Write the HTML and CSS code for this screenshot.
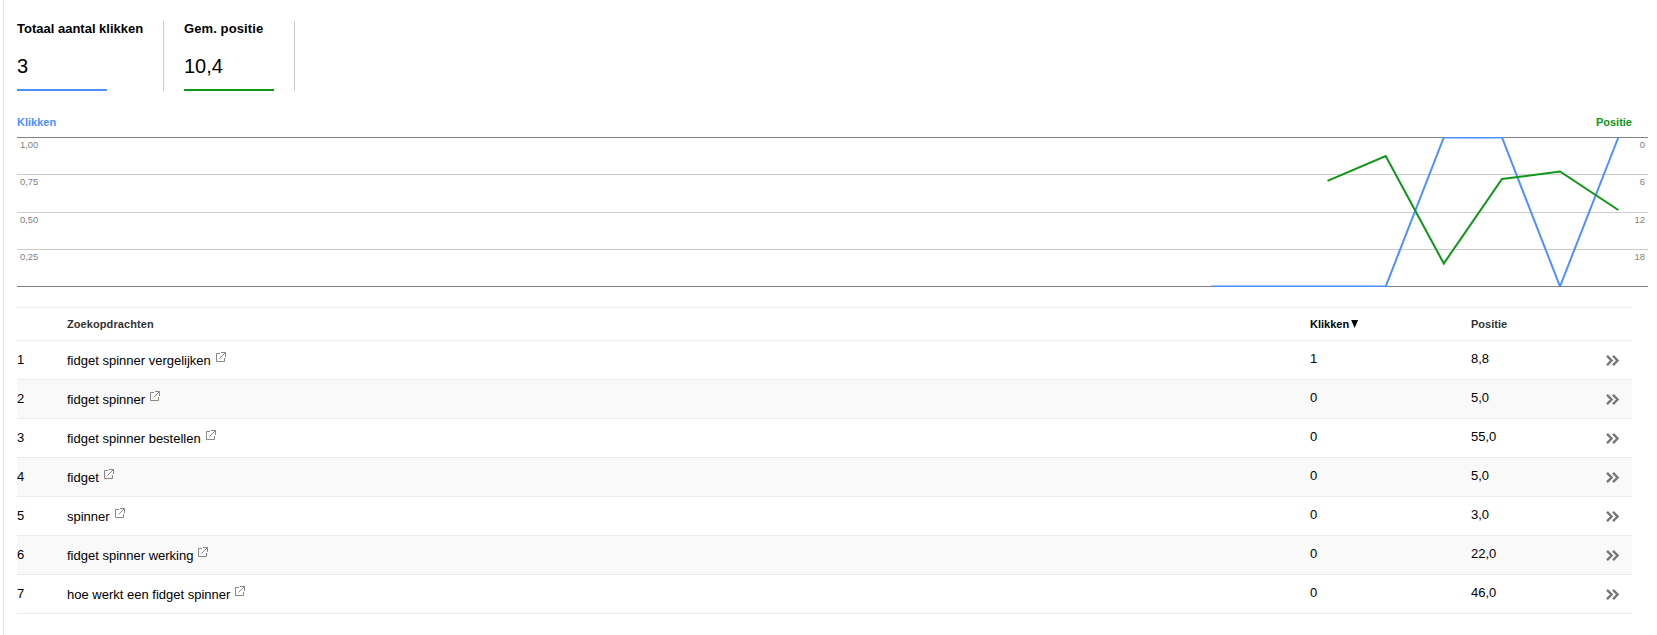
FILE: index.html
```html
<!DOCTYPE html>
<html lang="nl">
<head>
  <meta charset="UTF-8">
  <meta name="viewport" content="width=device-width, initial-scale=1">
  <title>Zoekanalyse</title>
  <link rel="stylesheet" href="styles.css">
</head>
<body>
  <!-- Shared icons -->
  <svg class="icon-defs" width="0" height="0">
    <symbol id="icon-open" viewBox="0 0 10 10">
      <path d="M4 1.5H0.5V9.5H8.5V6M5 0.5H9.5V5M3.5 6.5L9.5 0.5" />
    </symbol>
    <symbol id="icon-more" viewBox="0 0 13 11">
      <path d="M1 0.8L5.6 5.5L1 10.2M7 0.8L11.6 5.5L7 10.2" />
    </symbol>
  </svg>

  <main class="report">
    <section class="totals">
      <div class="total clicks">
        <div class="total-label">Totaal aantal klikken</div>
        <div class="total-value">3</div>
      </div>
      <div class="total position">
        <div class="total-label">Gem. positie</div>
        <div class="total-value">10,4</div>
      </div>
    </section>

    <section class="chart">
      <div class="chart-titles">
        <span class="title-clicks">Klikken</span>
        <span class="title-position">Positie</span>
      </div>
      <div class="plot">
        <div class="band top"><span>1,00</span><span>0</span></div>
        <div class="band"><span>0,75</span><span>6</span></div>
        <div class="band"><span>0,50</span><span>12</span></div>
        <div class="band"><span>0,25</span><span>18</span></div>
        <svg class="lines" width="1631" height="150" viewBox="0 0 1631 150">
          <polyline class="line-clicks" points="1194,149.5 1368.7,149.5 1426.8,0.5 1485,0.5 1543,149.5 1601.3,0.5" />
          <polyline class="line-position" points="1310.5,43.8 1368.7,19 1426.8,126.5 1485,42 1543,34.5 1601.3,73" />
        </svg>
      </div>
    </section>

    <table class="queries">
      <thead>
        <tr>
          <th class="col-rank"></th>
          <th class="col-query">Zoekopdrachten</th>
          <th class="col-clicks sorted">Klikken<span class="arrow"></span></th>
          <th class="col-position">Positie</th>
          <th class="col-more"></th>
        </tr>
      </thead>
      <tbody id="query-rows"></tbody>
    </table>
  </main>

  <script>
    const queries = [
      ['fidget spinner vergelijken', '1', '8,8'],
      ['fidget spinner', '0', '5,0'],
      ['fidget spinner bestellen', '0', '55,0'],
      ['fidget', '0', '5,0'],
      ['spinner', '0', '3,0'],
      ['fidget spinner werking', '0', '22,0'],
      ['hoe werkt een fidget spinner', '0', '46,0']
    ];

    // Fill the table, one row per search query
    document.getElementById('query-rows').innerHTML = queries.map(([query, clicks, position], i) => `
      <tr>
        <td class="rank">${i + 1}</td>
        <td class="query">${query}<svg class="open" width="10" height="10"><use href="#icon-open" /></svg></td>
        <td>${clicks}</td>
        <td>${position}</td>
        <td class="more"><svg width="13" height="11"><use href="#icon-more" /></svg></td>
      </tr>`).join('');
  </script>
</body>
</html>
```
FILE: styles.css
```css
body {
  margin: 0;
  font-family: Arial, "Liberation Sans", sans-serif;
  font-size: 13px;
  background: #fff;
  color: #000;
}
.icon-defs {
  display: block;
}
.report {
  box-sizing: border-box;
  min-height: 635px;
  margin-left: 3px;
  padding: 21px 9px 0 13px;
  border-left: 1px solid #e5e5e5;
}

/* Totals above the chart */
.totals {
  display: flex;
  gap: 20px;
}
.total {
  box-sizing: border-box;
  height: 70px;
  padding-right: 20px;
  border-right: 1px solid #ccc;
}
.total.clicks {
  width: 147px;
}
.total.position {
  width: 111px;
}
.total-label {
  font-weight: bold;
  line-height: 15px;
  white-space: nowrap;
}
.position .total-label {
  letter-spacing: 0.1px;
}
.total-value {
  box-sizing: border-box;
  width: 90px;
  height: 55px;
  padding-top: 19px;
  font-size: 20px;
  line-height: 23px;
  border-bottom: 2px solid #4d90fe;
}
.position .total-value {
  border-bottom-color: #109618;
}

/* Chart */
.chart-titles {
  display: flex;
  justify-content: space-between;
  padding: 24px 16px 8px 0;
  font-size: 11px;
  font-weight: bold;
  line-height: 14px;
}
.title-clicks {
  color: #4d90fe;
}
.title-position {
  color: #109618;
}
.plot {
  position: relative;
  height: 149px;
  border-bottom: 1px solid #808080;
}
.band {
  box-sizing: border-box;
  display: flex;
  justify-content: space-between;
  height: 37px;
  padding: 1px 3px 0;
  border-top: 1px solid #ccc;
  font-size: 9.4px;
  line-height: 11px;
  color: #808080;
}
.band.top {
  border-top-color: #808080;
}
.band:nth-child(2) {
  height: 38px;
}
.lines {
  position: absolute;
  top: 0;
  left: 0;
}
.lines polyline {
  fill: none;
  stroke-width: 2;
}
.line-clicks {
  stroke: #4d90fe;
}
.line-position {
  stroke: #109618;
}

/* Query table */
.queries {
  width: 1615px;
  margin-top: 20px;
  border-collapse: separate;
  border-spacing: 0;
  border-top: 1px solid #ebebeb;
  table-layout: fixed;
}
.queries th {
  box-sizing: border-box;
  height: 33px;
  padding: 0;
  border-bottom: 1px solid #ebebeb;
  font-size: 11px;
  text-align: left;
  color: #333;
}
.queries th.col-query {
  letter-spacing: 0.08px;
}
.queries th.sorted {
  color: #000;
}
.col-rank {
  width: 50px;
}
.col-clicks {
  width: 161px;
}
.col-position {
  width: 132px;
}
.col-more {
  width: 29px;
}
.arrow {
  display: inline-block;
  width: 7px;
  height: 8px;
  margin-left: 2px;
  background: #000;
  clip-path: polygon(0 0, 100% 0, 50% 100%);
}
.queries td {
  box-sizing: border-box;
  height: 39px;
  padding: 10px 0 0;
  border-bottom: 1px solid #ebebeb;
  line-height: 15px;
  vertical-align: top;
}
.queries tbody tr:nth-child(even) {
  background: #f9f9f9;
}
.queries td.rank {
  padding-top: 11px;
}
.queries td.query {
  padding-top: 11px;
}
.open {
  margin-left: 5px;
  vertical-align: 3px;
  fill: none;
  stroke: #888;
}
.queries td.more {
  padding-top: 14px;
}
.more svg {
  display: block;
  margin-left: 3px;
  fill: none;
  stroke: #777;
  stroke-width: 2.4;
}
```
